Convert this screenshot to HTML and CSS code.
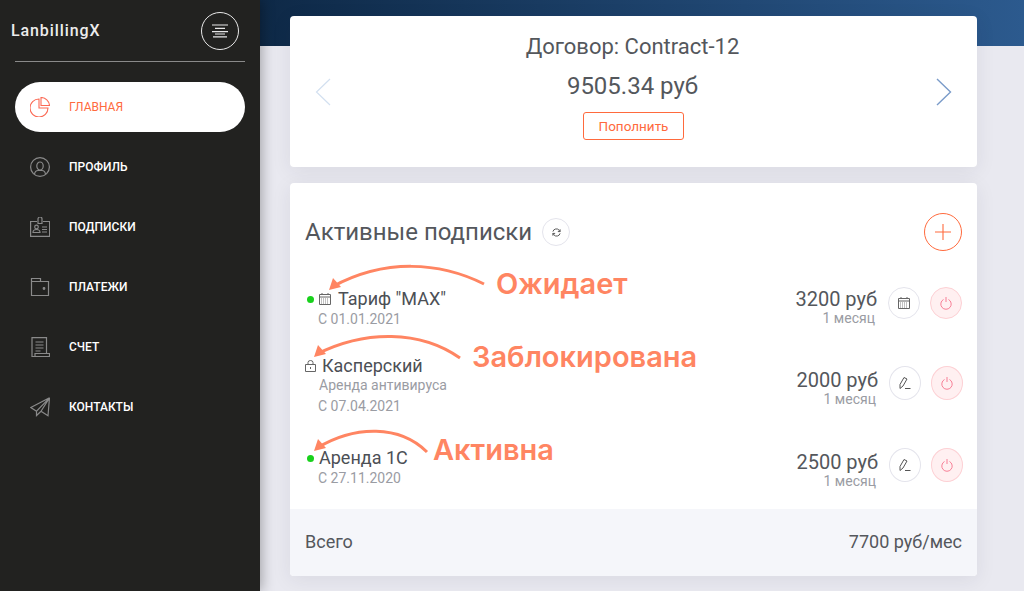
FILE: index.html
```html
<!DOCTYPE html>
<html lang="ru">
<head>
    <meta charset="UTF-8">
    <title>LanbillingX</title>
    <link rel="stylesheet" href="styles.css">
</head>
<body>
    <div class="app">
        <aside class="sidebar">
            <div class="brand">
                <span class="brand-name">LanbillingX</span>
                <button class="menu-button">
                    <svg width="16" height="14" viewBox="0 0 16 14" fill="none" stroke="#e8e8e8" stroke-width="1.2">
                        <path d="M0 1h16M3 4.300h10M0 7.600h16M3 10h10M1 12.800h14"/>
                    </svg>
                </button>
            </div>
            <nav class="nav">
                <a class="nav-item active">
                    <svg class="nav-icon" viewBox="0 0 20 20" fill="none" stroke="#fb6a55" stroke-width="1.100">
                        <path d="M9 2A9 9 0 1 0 18 11H9z"/>
                        <path d="M11 .5A8.500 8.500 0 0 1 19.500 8.500H11z"/>
                    </svg>
                    <span>Главная</span>
                </a>
                <a class="nav-item">
                    <svg class="nav-icon" viewBox="0 0 20 20" fill="none" stroke="#8a8a8a" stroke-width="1.200">
                        <circle cx="10" cy="10" r="9.400"/>
                        <ellipse cx="10" cy="9" rx="3.200" ry="4"/>
                        <path d="M4.500 17c.5-2.500 2.500-3.500 3.500-3.500h4c1 0 3 1 3.500 3.500"/>
                    </svg>
                    <span>Профиль</span>
                </a>
                <a class="nav-item">
                    <svg class="nav-icon" viewBox="0 0 20 20" fill="none" stroke="#8a8a8a" stroke-width="1.200">
                        <path d="M7 4.500H.6v14.900h19V4.500H13"/>
                        <path d="M8 6.500V2a2 2 0 0 1 4 0v4.500z"/>
                        <circle cx="6.500" cy="10" r="1.800"/>
                        <path d="M3 15.500c0-2 1.500-3 3.500-3s3.500 1 3.500 3zM12 10h5M12 12.500h5M12 15h5"/>
                    </svg>
                    <span>Подписки</span>
                </a>
                <a class="nav-item">
                    <svg class="nav-icon" viewBox="0 0 20 20" fill="none" stroke="#8a8a8a" stroke-width="1.200">
                        <path d="M1.500 1.500h9v3h8v14H1.500zM1.500 4.500h9"/>
                        <circle cx="14" cy="11.500" r=".8" fill="#8a8a8a"/>
                    </svg>
                    <span>Платежи</span>
                </a>
                <a class="nav-item">
                    <svg class="nav-icon" viewBox="0 0 20 20" fill="none" stroke="#8a8a8a" stroke-width="1.200">
                        <path d="M5 19.500H2V.6h14.500v16"/>
                        <path d="M5 19.500h14.500v-3H5zM5.500 5h8M5.500 8h8M5.500 11h8M5.500 14h5"/>
                    </svg>
                    <span>Счет</span>
                </a>
                <a class="nav-item">
                    <svg class="nav-icon" viewBox="0 0 20 20" fill="none" stroke="#8a8a8a" stroke-width="1.200">
                        <path d="M19.500 .8L.8 10.500l5.700 3.700zM19.500 .8l-1.500 18-7-4.600-4.500 4.300v-4.300M19.500 .8L11 14.200"/>
                    </svg>
                    <span>Контакты</span>
                </a>
            </nav>
        </aside>

        <main class="content">
            <section class="card contract">
                <svg class="slide-arrow" width="16" height="28" viewBox="0 0 16 28" fill="none" stroke="#d3e0f0" stroke-width="1.200">
                    <path d="M15 1L1.500 14 15 27"/>
                </svg>
                <div class="contract-info">
                    <div class="contract-name">Договор: Contract-12</div>
                    <div class="contract-balance">9505.34 руб</div>
                    <button class="top-up">Пополнить</button>
                </div>
                <svg class="slide-arrow" width="16" height="28" viewBox="0 0 16 28" fill="none" stroke="#7a9bc9" stroke-width="1.400">
                    <path d="M1 1l13.500 13L1 27"/>
                </svg>
            </section>

            <section class="card subs">
                <div class="subs-head">
                    <h2 class="subs-title">Активные подписки</h2>
                    <button class="round-button refresh">
                        <svg width="9" height="9" viewBox="0 0 10 10" fill="none" stroke="#555" stroke-width="1.100">
                            <path d="M1 4a4 4 0 0 1 7-1.500L9 4M9 1.500V4H6.500M9 6a4 4 0 0 1-7 1.500L1 6M1 8.500V6h2.500"/>
                        </svg>
                    </button>
                    <button class="round-button add">
                        <svg width="16" height="16" viewBox="0 0 16 16" stroke="#ff6a3d" stroke-width="1.100">
                            <path d="M8 0v16M0 8h16"/>
                        </svg>
                    </button>
                </div>

                <div class="sub-row row-max">
                    <div class="sub-main">
                        <div class="sub-name">
                            <span class="dot"></span>
                            <svg class="state-icon" width="12" height="12" viewBox="0 0 12 12" fill="none" stroke="#666" stroke-width="1">
                                <path d="M.5 1.500h11v10H.5zM.5 4h11M3 0v2M9 0v2"/>
                                <path class="cal-grid" d="M2 6h8M2 8h8M2 10h8"/>
                            </svg>
                            Тариф "MAX"
                        </div>
                        <div class="sub-date">С 01.01.2021</div>
                    </div>
                    <div class="sub-price">
                        <div class="price">3200 руб</div>
                        <div class="period">1 месяц</div>
                    </div>
                    <button class="round-button action">
                        <svg width="12" height="12" viewBox="0 0 12 12" fill="none" stroke="#666" stroke-width="1">
                            <path d="M.5 1.500h11v10H.5zM.5 4h11M3 0v2M9 0v2"/>
                            <path class="cal-grid" d="M2 6h8M2 8h8M2 10h8"/>
                        </svg>
                    </button>
                    <button class="round-button power">
                        <svg width="12" height="13" viewBox="0 0 12 13" fill="none" stroke="#f77f96" stroke-width="1">
                            <path d="M3.500 2.500a5.200 5.200 0 1 0 5 0M6 0v5"/>
                        </svg>
                    </button>
                </div>

                <div class="sub-row row-kasp">
                    <div class="sub-main">
                        <div class="sub-name">
                            <svg class="state-icon lock" width="11" height="12" viewBox="0 0 11 12" fill="none" stroke="#666" stroke-width="1">
                                <path d="M.5 4.500h10v7H.5zM3 4.500V2.500a2.500 2 0 0 1 5 0v2M5.500 7v2"/>
                            </svg>
                            Касперский
                        </div>
                        <div class="sub-desc">Аренда антивируса</div>
                        <div class="sub-date">С 07.04.2021</div>
                    </div>
                    <div class="sub-price">
                        <div class="price">2000 руб</div>
                        <div class="period">1 месяц</div>
                    </div>
                    <button class="round-button action tall">
                        <svg width="14" height="14" viewBox="0 0 14 14" fill="none" stroke="#555" stroke-width="1">
                            <path d="M2 12.500V8.500L6 1.500l3 1.500-4 7zM7 12.500h5.500"/>
                        </svg>
                    </button>
                    <button class="round-button power tall">
                        <svg width="12" height="13" viewBox="0 0 12 13" fill="none" stroke="#f77f96" stroke-width="1">
                            <path d="M3.500 2.500a5.200 5.200 0 1 0 5 0M6 0v5"/>
                        </svg>
                    </button>
                </div>

                <div class="sub-row row-1c">
                    <div class="sub-main">
                        <div class="sub-name">
                            <span class="dot"></span>
                            Аренда 1С
                        </div>
                        <div class="sub-date">С 27.11.2020</div>
                    </div>
                    <div class="sub-price">
                        <div class="price">2500 руб</div>
                        <div class="period">1 месяц</div>
                    </div>
                    <button class="round-button action tall">
                        <svg width="14" height="14" viewBox="0 0 14 14" fill="none" stroke="#555" stroke-width="1">
                            <path d="M2 12.500V8.500L6 1.500l3 1.500-4 7zM7 12.500h5.500"/>
                        </svg>
                    </button>
                    <button class="round-button power tall">
                        <svg width="12" height="13" viewBox="0 0 12 13" fill="none" stroke="#f77f96" stroke-width="1">
                            <path d="M3.500 2.500a5.200 5.200 0 1 0 5 0M6 0v5"/>
                        </svg>
                    </button>
                </div>

                <div class="subs-total">
                    <span>Всего</span>
                    <span class="total-sum">7700 руб/мес</span>
                </div>
            </section>
        </main>
    </div>

    <!-- callouts drawn over the screenshot -->
    <svg class="callout-arrows" width="1024" height="591" viewBox="0 0 1024 591" fill="none" stroke="#ff8562" stroke-width="3">
        <path d="M484 284C440 262 385 258 332 287"/>
        <path d="M329 290l4-12 8 9z" fill="#ff8562" stroke="none"/>
        <path d="M460 358C420 330 365 330 317 354"/>
        <path d="M314 357l4-12 8 9z" fill="#ff8562" stroke="none"/>
        <path d="M427 452C400 425 355 425 317 448"/>
        <path d="M314 451l4-12 8 9z" fill="#ff8562" stroke="none"/>
    </svg>
    <span class="callout callout-wait">Ожидает</span>
    <span class="callout callout-block">Заблокирована</span>
    <span class="callout callout-active">Активна</span>
</body>
</html>
```

FILE: styles.css
```css
* { box-sizing: border-box; }
html, body {
    margin: 0;
    height: 100%;
}
body {
    font-family: Roboto, "Liberation Sans", sans-serif;
    color: #54575c;
    overflow: hidden;
}
button {
    font-family: inherit;
    cursor: pointer;
    background: none;
    padding: 0;
}
.app {
    display: flex;
    height: 591px;
}

/* sidebar */
.sidebar {
    width: 260px;
    flex: none;
    background: #222220;
    box-shadow: 2px 0 12px rgba(0,0,0,0.3);
    padding: 12px 15px 0;
    position: relative;
}
.brand {
    display: flex;
    justify-content: space-between;
    align-items: center;
    height: 50px;
    padding: 0 6px 12px 0;
    border-bottom: 1px solid #8a8a8a;
    margin-bottom: 20px;
}
.brand-name {
    color: #ececec;
    font-size: 16px;
    font-weight: 500;
    letter-spacing: 0.9px;
    margin-left: -4px;
}
.menu-button {
    width: 38px;
    height: 38px;
    border: 1px solid #e8e8e8;
    border-radius: 50%;
    display: flex;
    align-items: center;
    justify-content: center;
}
.nav-item {
    display: flex;
    align-items: center;
    height: 50px;
    margin-bottom: 10px;
    padding-left: 15px;
    border-radius: 25px;
    color: #fff;
    font-size: 12px;
    font-weight: 500;
    text-transform: uppercase;
}
.nav-item.active {
    background: #fff;
    color: #ff6a3d;
    font-weight: 400;
}
.nav-icon {
    width: 20px;
    height: 20px;
    margin-right: 19px;
}

/* main area */
.content {
    flex: 1;
    background: #e9e9f0 linear-gradient(90deg, #0e2947, #2c5a8e) no-repeat;
    background-size: 100% 46px;
    padding: 16px 47px 0 30px;
}
.card {
    background: #fff;
    border-radius: 4px;
    box-shadow: 0 4px 20px rgba(40,40,60,0.08);
}
.contract {
    height: 151px;
    display: flex;
    align-items: center;
    justify-content: space-between;
    padding: 0 25px;
    margin-bottom: 16px;
}
.slide-arrow { flex: none; }
.contract-info { text-align: center; }
.contract-name {
    font-size: 22px;
    line-height: 24px;
    margin-top: 19px;
    padding-right: 2px;
}
.contract-balance {
    font-size: 24px;
    line-height: 28px;
    margin-top: 13px;
    padding-right: 2px;
}
.top-up {
    width: 101px;
    height: 28px;
    margin-top: 12px;
    border: 1px solid #ff6a3d;
    border-radius: 3px;
    color: #ff6a3d;
    font-size: 13.500px;
    margin-bottom: 27px;
}

/* subscriptions */
.subs {
    height: 393px;
    display: flex;
    flex-direction: column;
    overflow: hidden;
}
.subs-head {
    display: flex;
    align-items: center;
    height: 38px;
    margin: 30px 15px 0;
}
.subs-title {
    margin: 0;
    font-size: 24px;
    font-weight: 400;
}
.round-button {
    flex: none;
    border: 1px solid #e4e4ec;
    border-radius: 50%;
    display: flex;
    align-items: center;
    justify-content: center;
}
.refresh {
    width: 28px;
    height: 28px;
    margin-left: 10px;
}
.add {
    width: 38px;
    height: 38px;
    margin-left: auto;
    border-color: #ff6a3d;
}
.sub-row {
    display: flex;
    align-items: flex-start;
    padding: 0 15px 0 28px;
}
.row-max { margin-top: 37px; height: 52px; }
.row-kasp { margin-top: 15px; height: 72px; padding-right: 14px; }
.row-1c { margin-top: 20px; height: 59px; padding-right: 14px; }
.sub-main { flex: 1; }
.sub-name {
    display: flex;
    align-items: center;
    font-size: 18px;
    line-height: 22px;
    color: #4c4f55;
}
.dot {
    width: 7px;
    height: 7px;
    border-radius: 50%;
    background: #18d11c;
    margin: 0 5px 0 -11px;
    flex: none;
}
.state-icon { margin-right: 7px; flex: none; }
.state-icon.lock { margin: 0 6px 0 -13px; }
.cal-grid {
    stroke-dasharray: 1 1;
    stroke-width: 0.8;
}
.sub-date {
    font-size: 14px;
    line-height: 16px;
    color: #9a9ca3;
    margin-top: 1px;
}
.sub-desc {
    font-size: 14px;
    line-height: 18px;
    color: #9a9ca3;
    margin: -1px 0 0 1px;
}
.row-kasp .sub-date { margin-top: 4px; }
.sub-price {
    text-align: right;
    margin-right: 11px;
}
.price {
    font-size: 20px;
    line-height: 22px;
}
.period {
    font-size: 14px;
    line-height: 16px;
    color: #9a9ca3;
    margin-right: 2px;
}
.action, .power {
    width: 32px;
    height: 32px;
    margin-top: -1px;
}
.tall { height: 34px; }
.row-kasp .tall { margin-top: 11px; }
.row-1c .tall { margin-top: 1px; }
.row-kasp .sub-price { margin-top: 14px; }
.row-1c .sub-price { margin-top: 4px; }
.power {
    margin-left: 10px;
    background: #fff0f1;
    border-color: #fdd0d4;
}
.subs-total {
    margin-top: auto;
    height: 67px;
    background: #f5f6fa;
    display: flex;
    align-items: center;
    justify-content: space-between;
    padding: 0 15px 2px;
    font-size: 18px;
}

/* callouts */
.callout-arrows {
    position: absolute;
    left: 0;
    top: 0;
    pointer-events: none;
}
.callout {
    position: absolute;
    color: #ff8562;
    font-family: Inter, Roboto, sans-serif;
    font-size: 29px;
    font-weight: 600;
    line-height: 34px;
    white-space: nowrap;
}
.callout-wait { left: 496px; top: 267px; }
.callout-block { left: 472px; top: 340px; }
.callout-active { left: 433px; top: 433px; }
```
